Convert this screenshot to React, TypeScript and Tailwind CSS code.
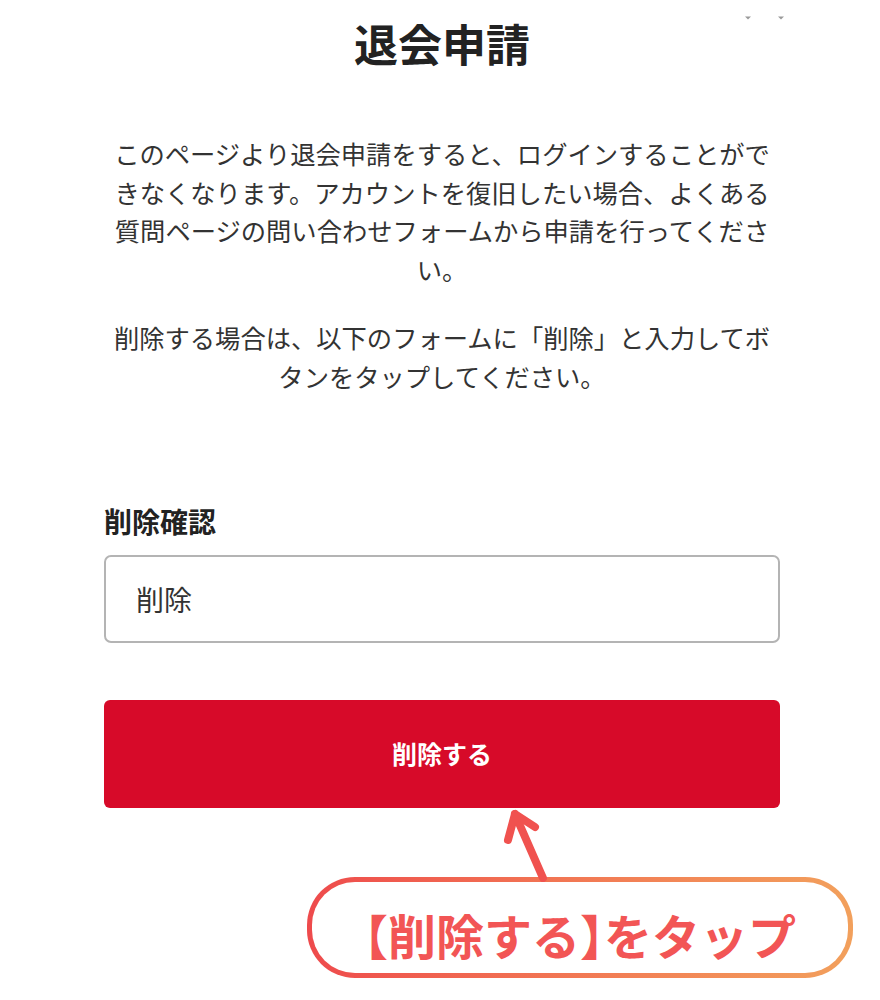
import React from 'react';

const font = { fontFamily: '"Noto Sans CJK JP", "Noto Sans", sans-serif' };
const half = { fontFeatureSettings: '"halt"' };

function Caret() {
  return (
    <svg width="8" height="6" viewBox="0 0 8 6">
      <path d="M1 1.5 L7 1.5 L4 4.5 Z" fill="#9a9a9a" />
    </svg>
  );
}

function Arrow() {
  return (
    <svg className="ml-[500px] block" width="52" height="74" viewBox="0 0 52 74">
      <g stroke="#f0524f" strokeWidth="8" strokeLinecap="round" strokeLinejoin="round" fill="none">
        <path d="M15 6 L43 70" />
        <path d="M8 32 L15 6 L35 19" />
      </g>
    </svg>
  );
}

export default function App() {
  return (
    <div className="relative min-h-[1000px] w-[880px] overflow-hidden bg-white" style={font}>
      <div className="absolute right-[95px] top-[15px] flex gap-[25px]">
        <Caret />
        <Caret />
      </div>

      <div className="ml-[104px] w-[676px]">
        <h1 className="flex h-[86px] items-center justify-center text-[44px] font-bold leading-none text-[#222]">
          退会申請
        </h1>

        <p className="mt-[48px] text-center text-[25.3px] leading-[38.5px] text-[#333]">
          このページより退会申請をすると、ログインすることができなくなります。アカウントを復旧したい場合、よくある質問ページの問い合わせフォームから申請を行ってください。
        </p>
        <p className="mt-[30px] text-center text-[25.3px] leading-[39px] text-[#333]">
          削除する場合は、以下のフォームに「削除」と入力してボタンをタップしてください。
        </p>

        <label className="mt-[108px] block text-[28px] font-bold leading-[34px] text-[#222]">
          削除確認
        </label>
        <div className="mt-[17px] flex h-[88px] items-center rounded-[7px] border-2 border-[#b4b4b4] pl-[30px] text-[28px] text-[#333]">
          削除
        </div>

        <button
          type="button"
          className="mt-[57px] flex h-[108px] w-full items-center justify-center rounded-[6px] bg-[#d70a29] text-[25px] font-bold text-white"
        >
          削除する
        </button>
      </div>

      <Arrow />

      <div className="ml-[307px] -mt-[5px] h-[101px] w-[546px] rounded-[48px] bg-gradient-to-r from-[#ee4a4c] to-[#f2a05c] p-[5px]">
        <div className="flex h-full items-center justify-center rounded-[43px] bg-white pt-[12px] text-[48px] font-bold leading-none text-[#f25555]">
          <span style={half}>【</span>削除する<span style={half}>】</span>をタップ
        </div>
      </div>
    </div>
  );
}
